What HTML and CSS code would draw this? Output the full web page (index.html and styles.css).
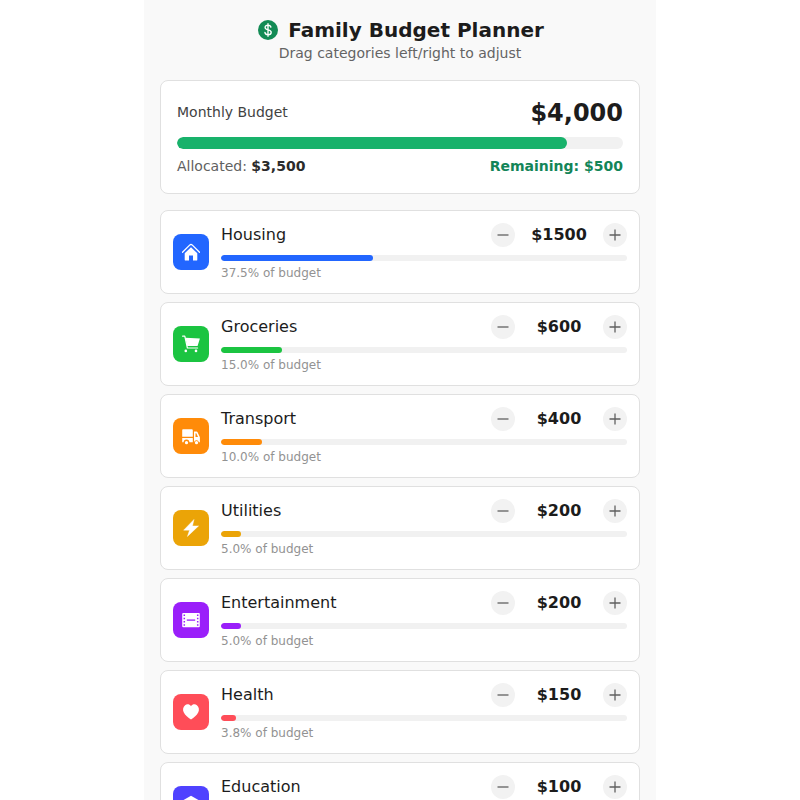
FILE: index.html
```html
<!DOCTYPE html>
<html lang="en">
<head>
<meta charset="utf-8">
<title>Family Budget Planner</title>
<link rel="stylesheet" href="styles.css">
</head>
<body>
<svg width="0" height="0" class="symbols">
  <symbol id="minus" viewBox="0 0 24 24"><path d="M6.500 12h11" stroke="#606060" stroke-width="1.300"/></symbol>
  <symbol id="plus" viewBox="0 0 24 24"><path d="M6.500 12h11M12 6.500v11" stroke="#606060" stroke-width="1.300"/></symbol>
</svg>
<main class="planner">
  <header class="header">
    <h1 class="title">
      <svg class="logo" viewBox="0 0 20 20"><circle cx="10" cy="10" r="10" fill="#138b55"/><path d="M12.9 7.2C12.7 5.9 11.7 5.2 10 5.2c-1.8 0-2.9.9-2.9 2.2 0 3.3 6.1 1.5 6.1 4.9 0 1.5-1.2 2.5-3.1 2.5-1.8 0-3-.9-3.2-2.4M10 3.7v12.6" fill="none" stroke="#fff" stroke-width="1.35" stroke-linecap="round"/></svg>
      <span>Family Budget Planner</span>
    </h1>
    <p class="subtitle">Drag categories left/right to adjust</p>
  </header>

  <section class="card summary">
    <div class="row"><span class="label">Monthly Budget</span><span class="total">$4,000</span></div>
    <div class="bar bar-large"><div class="fill" style="width:87.5%"></div></div>
    <div class="row details"><span>Allocated: <b>$3,500</b></span><b class="remaining">Remaining: $500</b></div>
  </section>

  <section class="list">
    <article class="card category blue">
      <div class="tile"><svg viewBox="0 0 18 18"><path d="M.5 9.200 7.900 1.900q1.100-1 2.200 0l7.400 7.300" fill="none" stroke="#fff" stroke-width="1.300" stroke-linecap="round"/><path d="M9 4.200 15.300 10.300v6.400q0 .900-.900.900H11v-5H7v5H3.600q-.9 0-.9-.9V10.300z" fill="#fff"/></svg></div>
      <div class="body">
        <div class="row"><span class="name">Housing</span><div class="stepper"><button aria-label="Decrease"><svg><use href="#minus"/></svg></button><b>$1500</b><button aria-label="Increase"><svg><use href="#plus"/></svg></button></div></div>
        <div class="bar"><div class="fill" style="width:37.5%"></div></div>
        <p class="share">37.5% of budget</p>
      </div>
    </article>
    <article class="card category green">
      <div class="tile"><svg viewBox="0 0 18 18"><path d="M.6 1.200h2.200l2.600 11.800h10.200" fill="none" stroke="#fff" stroke-width="1.200" stroke-linecap="round" stroke-linejoin="round"/><path d="M3.400 2.800 17.900 3.500 15.600 11H5.200z" fill="#fff"/><circle cx="3.800" cy="15.900" r="1.300" fill="#fff"/><circle cx="14" cy="15.900" r="1.300" fill="#fff"/></svg></div>
      <div class="body">
        <div class="row"><span class="name">Groceries</span><div class="stepper"><button aria-label="Decrease"><svg><use href="#minus"/></svg></button><b>$600</b><button aria-label="Increase"><svg><use href="#plus"/></svg></button></div></div>
        <div class="bar"><div class="fill" style="width:15%"></div></div>
        <p class="share">15.0% of budget</p>
      </div>
    </article>
    <article class="card category orange">
      <div class="tile"><svg viewBox="0 0 18 18"><path d="M1 2.300h8.800q1 0 1 1v6.500H.200V3.300q0-1 .8-1zM.200 11h10.600v4.300H7.400a2.900 2.900 0 0 0-5.800 0H.200zM12 4.500h2.400q.8 0 1.200.8l2.300 5v5h-1a2.500 2.500 0 0 0-4.900 0z" fill="#fff"/><path d="M13.500 6.200h.800l1.700 3.700h-2.500z" fill="#ff8b09"/><circle cx="4.500" cy="15.700" r="1.600" fill="#fff"/><circle cx="14.500" cy="15.700" r="1.600" fill="#fff"/></svg></div>
      <div class="body">
        <div class="row"><span class="name">Transport</span><div class="stepper"><button aria-label="Decrease"><svg><use href="#minus"/></svg></button><b>$400</b><button aria-label="Increase"><svg><use href="#plus"/></svg></button></div></div>
        <div class="bar"><div class="fill" style="width:10%"></div></div>
        <p class="share">10.0% of budget</p>
      </div>
    </article>
    <article class="card category gold">
      <div class="tile"><svg viewBox="0 0 18 18"><path d="M12 .400 1.600 11.200H7.500L5.400 17.500 16.600 6.900H10.500z" fill="#fff" stroke="#fff" stroke-width=".4" stroke-linejoin="round"/></svg></div>
      <div class="body">
        <div class="row"><span class="name">Utilities</span><div class="stepper"><button aria-label="Decrease"><svg><use href="#minus"/></svg></button><b>$200</b><button aria-label="Increase"><svg><use href="#plus"/></svg></button></div></div>
        <div class="bar"><div class="fill" style="width:5%"></div></div>
        <p class="share">5.0% of budget</p>
      </div>
    </article>
    <article class="card category purple">
      <div class="tile"><svg viewBox="0 0 18 18"><rect x=".200" y="2" width="17.600" height="14.200" rx="1" fill="#fff"/><path d="M2.300 3.400v12M15.700 3.400v12" stroke="#9a1ffa" stroke-width="1.500" stroke-dasharray="1.500 1.800"/><path d="M4.800 9.100h8.400" stroke="#9a1ffa" stroke-width="1.300"/></svg></div>
      <div class="body">
        <div class="row"><span class="name">Entertainment</span><div class="stepper"><button aria-label="Decrease"><svg><use href="#minus"/></svg></button><b>$200</b><button aria-label="Increase"><svg><use href="#plus"/></svg></button></div></div>
        <div class="bar"><div class="fill" style="width:5%"></div></div>
        <p class="share">5.0% of budget</p>
      </div>
    </article>
    <article class="card category red">
      <div class="tile"><svg viewBox="0 0 18 18"><path d="M9 3.300C7.600 1.100 4.900.800 3.100 2.200 1 3.800.500 6.900 1.700 9.300 3.200 12.300 6 14.800 9 16.600c3-1.800 5.800-4.300 7.300-7.300 1.200-2.400.7-5.500-1.400-7.100C13.100.800 10.400 1.100 9 3.300z" fill="#fff"/></svg></div>
      <div class="body">
        <div class="row"><span class="name">Health</span><div class="stepper"><button aria-label="Decrease"><svg><use href="#minus"/></svg></button><b>$150</b><button aria-label="Increase"><svg><use href="#plus"/></svg></button></div></div>
        <div class="bar"><div class="fill" style="width:3.75%"></div></div>
        <p class="share">3.8% of budget</p>
      </div>
    </article>
    <article class="card category indigo">
      <div class="tile"><svg viewBox="0 0 18 18"><path d="M9 .800 17 5.300v7.500L9 17.200 1 12.800V5.300z" fill="#fff"/></svg></div>
      <div class="body">
        <div class="row"><span class="name">Education</span><div class="stepper"><button aria-label="Decrease"><svg><use href="#minus"/></svg></button><b>$100</b><button aria-label="Increase"><svg><use href="#plus"/></svg></button></div></div>
        <div class="bar"><div class="fill" style="width:2.5%"></div></div>
      </div>
    </article>
  </section>
</main>
</body>
</html>
```
FILE: styles.css
```css
* { box-sizing: border-box; }
body {
  margin: 0;
  background: #fff;
  color: #1c1c1c;
  font-family: "DejaVu Sans", sans-serif;
}
h1, p { margin: 0; }
.symbols { display: none; }
.planner {
  width: 512px;
  height: 100vh;
  margin: 0 auto;
  padding: 16px;
  overflow: hidden;
  background: #f9f9f9;
}
.header { height: 64px; text-align: center; }
.title {
  display: flex;
  justify-content: center;
  align-items: center;
  gap: 10px;
  padding-left: 2px;
  font-size: 20px;
  line-height: 28px;
}
.logo { width: 20px; height: 20px; }
.subtitle { margin-top: -1px; font-size: 14px; line-height: 20px; color: #646464; }
.card {
  background: #fff;
  border: 1px solid #e0e0e0;
  border-radius: 8px;
}
.row { display: flex; justify-content: space-between; align-items: center; }
.summary { height: 114px; padding: 16px; margin-bottom: 16px; }
.summary .row { height: 32px; }
.label { font-size: 14px; line-height: 20px; color: #424242; margin-top: -2px; }
.total { font-size: 24px; line-height: 32px; font-weight: bold; }
.summary .details { height: 20px; margin-top: 7px; font-size: 14px; line-height: 20px; color: #616161; }
.details b { color: #2b2b2b; }
.details .remaining { color: #138558; }
.bar { height: 6px; border-radius: 3px; background: #f1f1f1; overflow: hidden; }
.fill { height: 100%; border-radius: inherit; background: var(--tone); }
.summary .bar { height: 12px; border-radius: 6px; margin-top: 8px; }
.summary .fill { background: #18b26b; }
.list { display: flex; flex-direction: column; gap: 8px; }
.category {
  display: flex;
  align-items: flex-start;
  gap: 12px;
  height: 84px;
  padding: 12px;
}
.tile {
  display: flex;
  justify-content: center;
  align-items: center;
  width: 36px;
  height: 36px;
  margin-top: 11px;
  border-radius: 8px;
  background: var(--tone);
}
.tile svg { width: 18px; height: 18px; }
.body { flex: 1; }
.body .row { height: 24px; margin-bottom: 8px; }
.name { font-size: 16px; line-height: 24px; }
.stepper { display: flex; align-items: center; gap: 8px; }
.stepper b { width: 72px; text-align: center; font-size: 16px; line-height: 24px; }
.stepper button {
  width: 24px;
  height: 24px;
  padding: 0;
  border: 0;
  border-radius: 50%;
  background: #f2f2f2;
}
.stepper svg { display: block; width: 24px; height: 24px; }
.share { margin-top: 4px; font-size: 12px; line-height: 16px; color: #929292; }
.blue { --tone: #2266ff; }
.green { --tone: #1bc441; }
.orange { --tone: #ff8b09; }
.gold { --tone: #eba407; }
.purple { --tone: #9a1ffa; }
.red { --tone: #ff4d58; }
.indigo { --tone: #4f42ff; }
```
